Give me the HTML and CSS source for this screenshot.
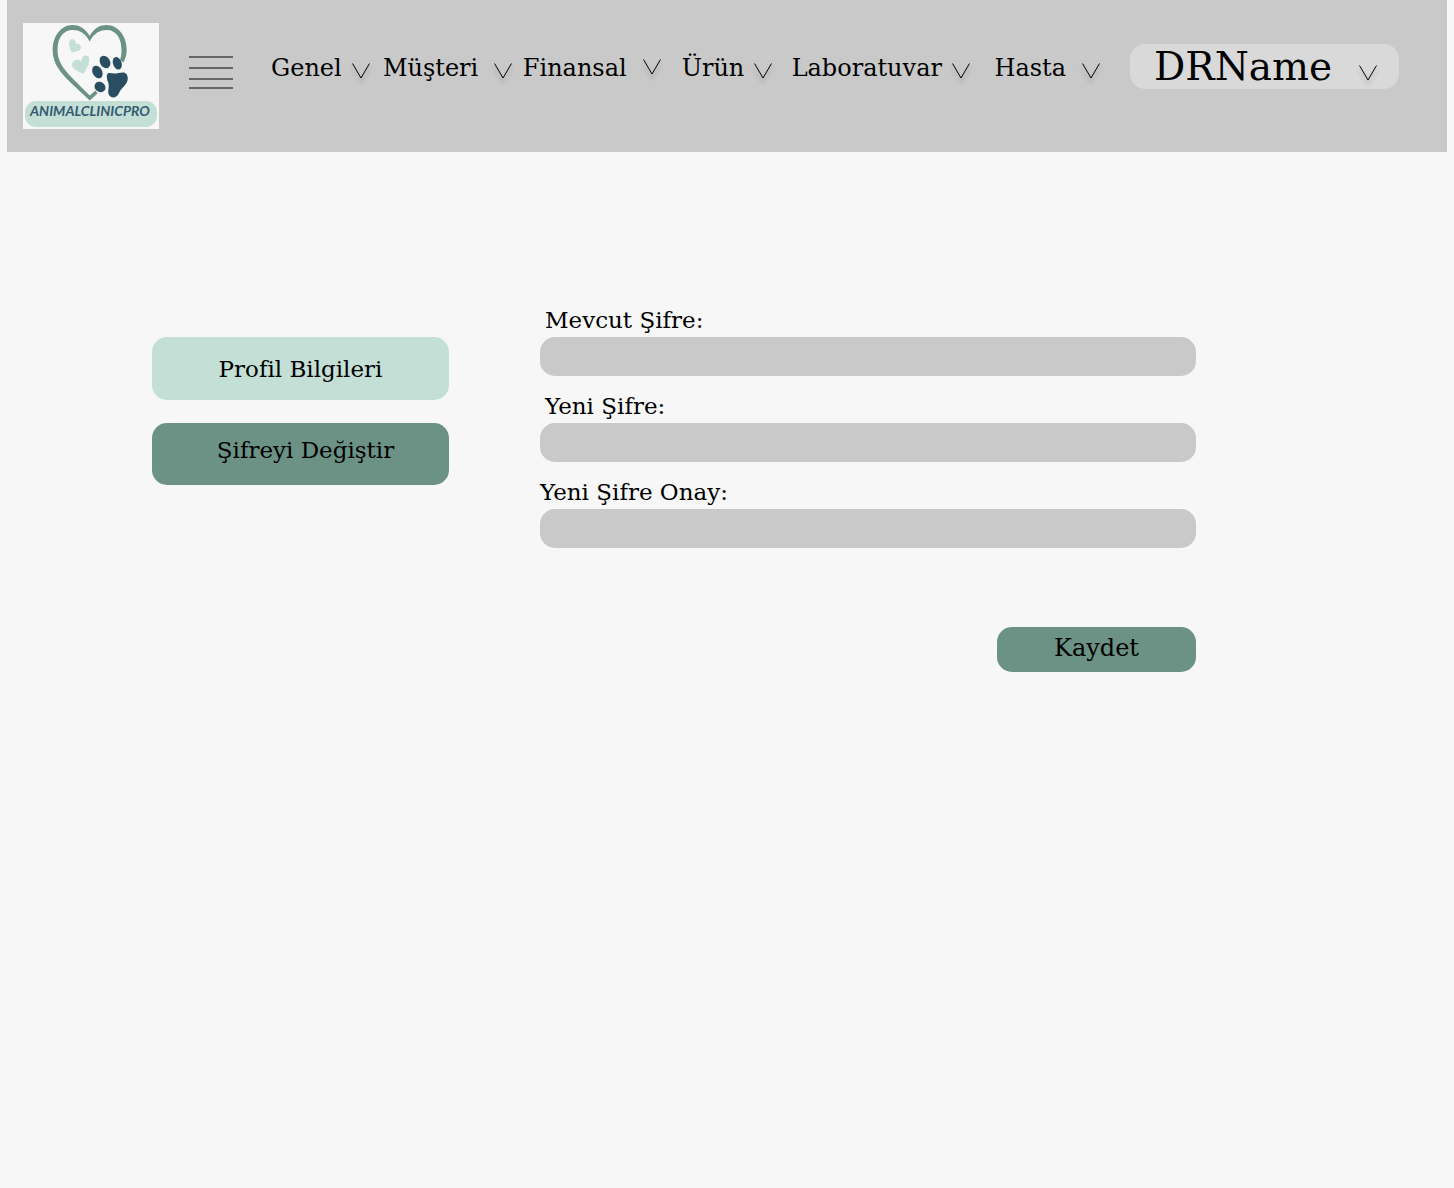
FILE: index.html
```html
<!DOCTYPE html>
<html lang="tr">
<head>
  <meta charset="utf-8">
  <meta name="viewport" content="width=device-width, initial-scale=1">
  <title>AnimalClinicPro</title>
  <link rel="stylesheet" href="styles.css">
</head>
<body>
  <svg class="sprite" aria-hidden="true">
    <symbol id="chevron" viewBox="0 0 18 16"><path d="M0.500 0.500 9 15 17.500 0.500" fill="none" stroke="#000"/></symbol>
  </svg>

  <header class="topbar">
    <a class="logo" href="#">
      <svg viewBox="0 0 136 106" role="img" aria-label="AnimalClinicPro">
        <path fill="#6b9284" d="M66.700 13C62 5 56 2 49.500 2C38 2 29.700 13 29.700 27C29.700 47 46 57 66.700 77.500L74.500 70.500L72.500 67.500L66.700 72.500C48 53 34.500 44 34.500 27C34.500 15 40 7 49.500 7C57 7 62 10 66.700 18.500C71 10 77 7 83.700 7C93 7 98.500 15 98.500 27C98.500 31 98 34 97 37L100.500 39.500C103 34 103.700 31 103.700 27C103.700 13 95 2 83.700 2C77 2 71 5 66.700 13Z"/>
        <path fill="#c4dfd6" d="M48.700 29.500C46.500 25 45.500 21 46.500 18C48 15 53 15.500 53 21C57 20 59 24 57.500 26C56 28.500 52 28.500 48.700 29.500Z"/>
        <path fill="#c4dfd6" d="M60.700 51C56 48.500 50 47 49 42.500C48.500 37.500 55 34.500 58.500 39C58 33 63 31 65.500 33.500C68 38 64 45 60.700 51Z"/>
        <g fill="#294e62">
          <ellipse cx="82" cy="39" rx="5" ry="6.500" transform="rotate(-30 82 39)"/>
          <ellipse cx="94.300" cy="40.300" rx="4.300" ry="6.500" transform="rotate(-20 94.300 40.300)"/>
          <ellipse cx="74.400" cy="49" rx="4.800" ry="6.700" transform="rotate(-28 74.400 49)"/>
          <ellipse cx="77" cy="64" rx="5.700" ry="5" transform="rotate(35 77 64)"/>
          <path d="M84 52C84.500 49 88 50 91 50.500C94 50.500 98 49 101 49.500C105.500 51 105.500 57 103.500 60C101 64 97.500 66 96 70C94 75.500 88 75.500 86 72C84 68 87 64 85 59C84 56 83.500 54 84 52Z"/>
        </g>
        <rect x="2" y="78" width="132" height="26" rx="11" fill="#c4dfd6"/>
        <text class="logo-text" x="7" y="93">ANIMALCLINICPRO</text>
      </svg>
    </a>

    <button class="menu" type="button" aria-label="Menü">
      <svg viewBox="0 0 44 33"><path d="M0 1H44M0 12H44M0 23H44M0 32H44" stroke="#666" stroke-width="2"/></svg>
    </button>

    <nav class="nav">
      <button type="button">Genel<svg class="chevron"><use href="#chevron"/></svg></button>
      <button type="button" class="wide">Müşteri<svg class="chevron"><use href="#chevron"/></svg></button>
      <button type="button" class="wide raised">Finansal<svg class="chevron"><use href="#chevron"/></svg></button>
      <button type="button">Ürün<svg class="chevron"><use href="#chevron"/></svg></button>
      <button type="button">Laboratuvar<svg class="chevron"><use href="#chevron"/></svg></button>
      <button type="button" class="wide">Hasta<svg class="chevron"><use href="#chevron"/></svg></button>
    </nav>

    <button class="account" type="button">DRName<svg class="chevron"><use href="#chevron"/></svg></button>
  </header>

  <main class="content">
    <aside class="tabs">
      <button type="button">Profil Bilgileri</button>
      <button type="button" class="active">Şifreyi Değiştir</button>
    </aside>

    <form class="form">
      <div class="field">
        <label class="inset" for="current">Mevcut Şifre:</label>
        <input id="current" type="password">
      </div>
      <div class="field">
        <label class="inset" for="new">Yeni Şifre:</label>
        <input id="new" type="password">
      </div>
      <div class="field">
        <label for="confirm">Yeni Şifre Onay:</label>
        <input id="confirm" type="password">
      </div>
      <button class="save" type="submit">Kaydet</button>
    </form>
  </main>
</body>
</html>
```

FILE: styles.css
```css
* {
  box-sizing: border-box;
}

body {
  margin: 0;
  background: #f7f7f7;
  color: #000;
  font: 24px/28px "DejaVu Serif", serif;
}

button {
  margin: 0;
  padding: 0;
  border: 0;
  background: none;
  color: inherit;
  font: inherit;
  white-space: nowrap;
  cursor: pointer;
}

.sprite {
  position: absolute;
  width: 0;
  height: 0;
}

.topbar {
  display: flex;
  align-items: flex-start;
  min-height: 152px;
  margin: 0 7px;
  padding: 23px 48px 23px 16px;
  background: #c9c9c9;
}

.logo {
  flex: none;
  width: 136px;
  height: 106px;
  background: #f7f7f7;
}

.logo svg,
.menu svg {
  display: block;
  width: 100%;
  height: 100%;
}

.logo-text {
  fill: #355a70;
  font: italic 700 14px Lato, sans-serif;
}

.menu {
  flex: none;
  width: 44px;
  height: 33px;
  margin: 33px 38px 0 30px;
}

.nav {
  display: grid;
  flex: 1;
  grid-template-columns: 112fr 140fr 159fr 110fr 203fr 105fr;
  margin: 31px 30px 0 0;
}

.nav button {
  display: flex;
  align-items: flex-end;
  gap: 10px;
}

.nav .wide {
  gap: 16px;
}

.nav .raised {
  align-items: center;
}

.chevron {
  flex: none;
  width: 18px;
  height: 16px;
  overflow: visible;
  filter: drop-shadow(0 4px 2px rgb(0 0 0 / 25%));
}

.nav .chevron {
  margin-bottom: 3px;
}

.account {
  display: flex;
  flex: none;
  align-items: center;
  justify-content: space-between;
  width: 269px;
  height: 45px;
  margin-top: 21px;
  padding: 0 22px 0 24px;
  border-radius: 15px;
  background: #d9d9d9;
  font-size: 39px;
}

.account .chevron {
  margin-top: 12px;
}

.content {
  display: grid;
  grid-template-columns: 297fr 656fr;
  gap: 91px;
  padding: 154px 258px 40px 152px;
}

.tabs {
  display: flex;
  flex-direction: column;
  gap: 23px;
  padding-top: 31px;
  font-size: 23px;
}

.tabs button {
  height: 63px;
  border-radius: 15px;
  background: #c4dfd6;
}

.tabs .active {
  height: 62px;
  padding: 0 0 8px 10px;
  background: #6b9284;
}

.form {
  display: flex;
  flex-direction: column;
  gap: 16px;
}

.field {
  display: flex;
  flex-direction: column;
  gap: 3px;
  font-size: 23px;
}

.field .inset {
  padding-left: 5px;
}

.field input {
  width: 100%;
  height: 39px;
  padding: 0 16px;
  border: 0;
  border-radius: 15px;
  background: #c9c9c9;
  font: inherit;
}

.save {
  align-self: flex-end;
  width: 199px;
  height: 45px;
  margin-top: 63px;
  padding-bottom: 4px;
  border-radius: 15px;
  background: #6b9284;
}
```
